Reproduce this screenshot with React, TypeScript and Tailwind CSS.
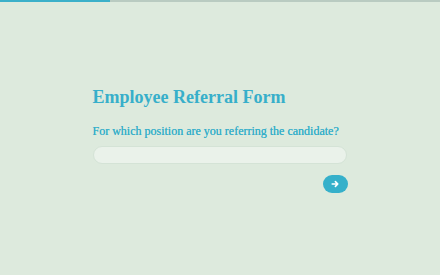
export default function App() {
  return (
    <div className="w-[440px] h-[275px] bg-[#ddeadd] flex flex-col overflow-hidden" style={{ fontFamily: '"Liberation Serif", serif' }}>
      <div className="h-[2px] w-full bg-[#b9cbc1] flex">
        <div className="h-full w-[110px] bg-[#3bb0c9]" />
      </div>
      <div className="flex-1 flex items-center justify-center">
        <div className="w-[255px] flex flex-col mt-[2px]">
          <h1 className="text-[18px] leading-[22px] font-bold text-[#37afca]">Employee Referral Form</h1>
          <p className="mt-[15px] text-[12px] leading-[16px] text-[#37afca] whitespace-nowrap [text-shadow:0_0_0.3px_#37afca]">For which position are you referring the candidate?</p>
          <input className="mt-[7px] h-[18px] w-[254px] rounded-full bg-[#eaf2ea] border border-[#d4e3d6] outline-none" />
          <div className="mt-[11px] flex justify-end">
            <button className="w-[25px] h-[18px] rounded-full bg-[#35b0ca] flex items-center justify-center">
              <svg width="8" height="8" viewBox="0 0 10 10" fill="none" stroke="white" strokeWidth="2" strokeLinecap="round" strokeLinejoin="round">
                <path d="M1.5 5h7M5.5 2l3 3-3 3" />
              </svg>
            </button>
          </div>
        </div>
      </div>
    </div>
  );
}
